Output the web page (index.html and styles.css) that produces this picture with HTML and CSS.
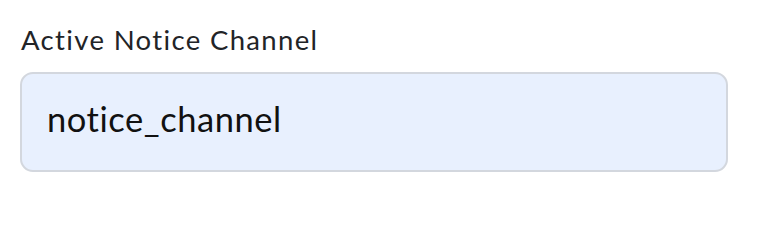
FILE: index.html
```html
<!DOCTYPE html>
<html lang="en">
<head>
<meta charset="utf-8">
<title>Active Notice Channel</title>
<link rel="stylesheet" href="styles.css">
</head>
<body>
<div class="field">
  <label class="field-label">Active Notice Channel</label>
  <div class="field-input">notice_channel</div>
</div>
</body>
</html>
```
FILE: styles.css
```css
html, body {
  margin: 0;
  padding: 0;
  background: #ffffff;
}

body {
  font-family: "Lato", "Open Sans", sans-serif;
}

.field {
  display: flex;
  flex-direction: column;
  gap: 17px;
  padding: 25px 36px 0 20px;
}

.field-label {
  display: block;
  padding-left: 1px;
  font-size: 27.5px;
  line-height: 30px;
  letter-spacing: 1.35px;
  color: #222427;
  white-space: nowrap;
}

.field-input {
  box-sizing: border-box;
  height: 100px;
  padding: 25px 24px 0 25px;
  border: 2px solid #d3d7de;
  border-radius: 13px;
  background: #e8f0fe;
  font-size: 34.5px;
  line-height: 40px;
  letter-spacing: 0.55px;
  color: #111111;
}
```
